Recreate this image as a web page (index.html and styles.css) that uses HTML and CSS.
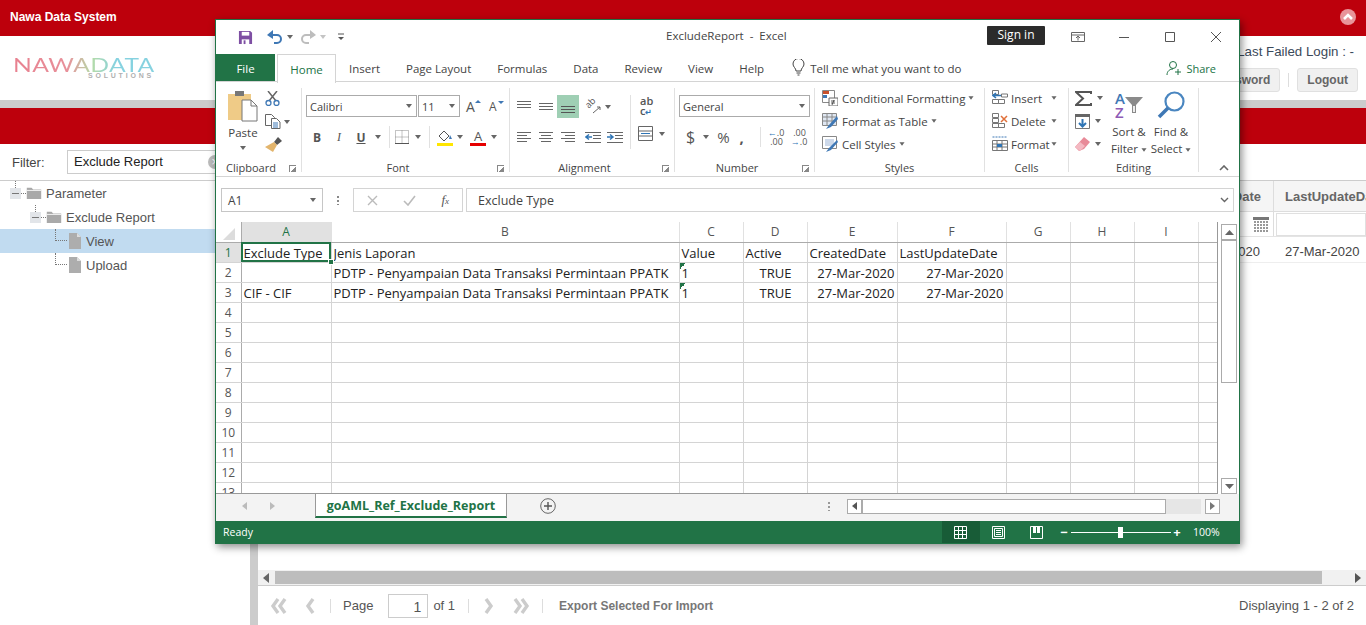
FILE: index.html
```html
<!DOCTYPE html>
<html lang="en">
<head>
    <meta charset="UTF-8">
    <title>Nawa Data System</title>
    <link rel="stylesheet" href="styles.css">
</head>
<body>

    <!-- Background app -->
    <div class="app">
        <div class="topbar">
            <span class="app-title">Nawa Data System</span>
            <svg class="collapse-top" width="18" height="18" viewBox="0 0 18 18"><circle cx="9" cy="9" r="8" fill="#e8949a"/><path d="M5 11l4-4 4 4" fill="none" stroke="#fff" stroke-width="2.6"/></svg>
        </div>
        <div class="brandbar">
            <div class="logo">
                <div class="logo-main">NAWADATA</div>
                <div class="logo-sub">SOLUTIONS</div>
            </div>
            <div class="userbox">
                <div class="last-login">Last Failed Login : -</div>
                <div class="user-btns">
                    <span class="btn">Change Password</span>
                    <span class="btn-sep"></span>
                    <span class="btn">Logout</span>
                </div>
            </div>
        </div>
        <div class="grayline"></div>
        <div class="redband"></div>

        <div class="workspace">
            <div class="sidebar">
                <div class="filter-row">
                    <label class="filter-label">Filter:</label>
                    <div class="filter-input">Exclude Report<span class="filter-clear">×</span></div>
                </div>
                <div class="tree">
                    <div class="tree-row lvl0"><span class="tree-toggle"></span><svg width="16" height="12" viewBox="0 0 20 14" preserveAspectRatio="none"><path d="M1 1h6l2 2h10v11H1z" fill="#a9a9a9"/><path d="M1 4h18" stroke="#fff"/></svg>Parameter</div>
                    <div class="tree-row lvl1"><span class="tree-toggle"></span><svg width="16" height="12" viewBox="0 0 20 14" preserveAspectRatio="none"><path d="M1 1h6l2 2h10v11H1z" fill="#a9a9a9"/><path d="M1 4h18" stroke="#fff"/></svg>Exclude Report</div>
                    <div class="tree-row lvl2 selected"><span class="tree-dots"></span><svg width="14" height="16" viewBox="0 0 14 16"><path d="M1 0h8l4 4v12H1z" fill="#adadad"/><path d="M9 0v4h4z" fill="#ddd"/></svg>View</div>
                    <div class="tree-row lvl2"><span class="tree-dots"></span><svg width="14" height="16" viewBox="0 0 14 16"><path d="M1 0h8l4 4v12H1z" fill="#adadad"/><path d="M9 0v4h4z" fill="#ddd"/></svg>Upload</div>
                </div>
            </div>
            <div class="splitter"></div>
            <div class="main">
                <div class="grid-area">
                    <div class="grid-head">
                        <div class="gh-cell gh-created">CreatedDate</div>
                        <div class="gh-cell gh-updated">LastUpdateDate</div>
                    </div>
                    <div class="grid-filter">
                        <div class="gf-cell gf-created"><svg width="16" height="15" viewBox="0 0 16 15"><path d="M0 0h16v3H0z" fill="#777"/><path d="M1 5h14M1 8h14M1 11h14M1 14h14" stroke="#999" stroke-width="2" stroke-dasharray="2 1"/></svg></div>
                        <div class="gf-cell gf-updated"><div class="gf-input"></div></div>
                    </div>
                    <div class="grid-row">
                        <div class="gr-cell gr-created">27-Mar-2020</div>
                        <div class="gr-cell gr-updated">27-Mar-2020</div>
                    </div>
                </div>
                <div class="hscroll">
                    <svg width="6" height="10" viewBox="0 0 6 10"><path d="M6 0v10L0 5z" fill="#666"/></svg>
                    <div class="hscroll-thumb"></div>
                    <svg width="6" height="10" viewBox="0 0 6 10"><path d="M0 0v10l6-5z" fill="#555"/></svg>
                </div>
                <div class="pager">
                    <svg class="pg-ic" width="17" height="16" viewBox="0 0 17 16"><path d="M8 1L3 8l5 7M15 1l-5 7 5 7" fill="none" stroke="#ccc" stroke-width="3.400"/></svg>
                    <svg class="pg-ic pg-prev" width="10" height="16" viewBox="0 0 10 16"><path d="M8 1L3 8l5 7" fill="none" stroke="#ccc" stroke-width="3.400"/></svg>
                    <span class="pg-sep"></span>
                    <span class="pg-text">Page</span>
                    <span class="pg-input">1</span>
                    <span class="pg-text">of 1</span>
                    <span class="pg-sep pg-sep2"></span>
                    <svg class="pg-ic pg-next" width="10" height="16" viewBox="0 0 10 16"><path d="M2 1l5 7-5 7" fill="none" stroke="#ccc" stroke-width="3.400"/></svg>
                    <svg class="pg-ic pg-last" width="17" height="16" viewBox="0 0 17 16"><path d="M2 1l5 7-5 7M9 1l5 7-5 7" fill="none" stroke="#ccc" stroke-width="3.400"/></svg>
                    <span class="pg-sep pg-sep3"></span>
                    <span class="pg-export">Export Selected For Import</span>
                    <span class="pg-display">Displaying 1 - 2 of 2</span>
                </div>
            </div>
        </div>
    </div>

    <!-- Excel window -->
    <div class="xl">
        <div class="xl-title">
            <div class="qat">
                <svg width="15" height="15" viewBox="0 0 16 16"><path d="M1 1h12l2 2v12H1z" fill="#7e4fa3"/><path d="M4 2h8v4H4z" fill="#fff"/><path d="M4 10h8v5H4z" fill="#fff"/><path d="M6 11h2v4H6z" fill="#7e4fa3"/></svg>
                <svg class="q-undo" width="15" height="14" viewBox="0 0 15 14"><path d="M3 5h7a3.500 3.500 0 0 1 0 8H7" fill="none" stroke="#3f78b5" stroke-width="2"/><path d="M6 0v9L0 5z" fill="#3f78b5"/></svg>
                <span class="caret"></span>
                <svg class="q-redo" width="15" height="14" viewBox="0 0 15 14"><path d="M12 5H5a3.500 3.500 0 0 0 0 8h3" fill="none" stroke="#bdbdbd" stroke-width="2"/><path d="M9 0v9l6-4z" fill="#bdbdbd"/></svg>
                <span class="caret light"></span>
                <svg class="q-more" width="8" height="8" viewBox="0 0 8 8"><path d="M1 1h6" stroke="#555"/><path d="M1 4h6L4 7z" fill="#555"/></svg>
            </div>
            <div class="xl-name">ExcludeReport&nbsp; -&nbsp; Excel</div>
            <div class="win-ctl">
                <span class="signin">Sign in</span>
                <svg class="w-ribbon" width="14" height="10" viewBox="0 0 14 10"><path d="M.5.500h13v9H.5zM.5 3h13M7 8.500V4M5 6l2-2 2 2" fill="none" stroke="#666"/></svg>
                <svg class="w-min" width="10" height="10" viewBox="0 0 10 10"><path d="M0 5.500h10" stroke="#555"/></svg>
                <svg class="w-max" width="10" height="10" viewBox="0 0 10 10"><path d="M.5.500h9v9h-9z" fill="none" stroke="#555"/></svg>
                <svg class="w-close" width="10" height="10" viewBox="0 0 10 10"><path d="M0 0l10 10M10 0L0 10" stroke="#555"/></svg>
            </div>
        </div>

        <div class="xl-tabs">
            <span class="tab tab-file">File</span>
            <span class="tab tab-home">Home</span>
            <span class="tab t-insert">Insert</span>
            <span class="tab t-next">Page Layout</span>
            <span class="tab t-next">Formulas</span>
            <span class="tab t-next">Data</span>
            <span class="tab t-next">Review</span>
            <span class="tab t-next">View</span>
            <span class="tab t-next">Help</span>
            <svg class="tell-ic" width="13" height="17" viewBox="0 0 13 17"><path d="M4 12c0-3-3-4-3-7a5.500 5.500 0 0 1 11 0c0 3-3 4-3 7zM4.500 14h4M5.500 16h2" fill="none" stroke="#444"/></svg>
            <span class="tell">Tell me what you want to do</span>
            <span class="share"><svg width="16" height="16" viewBox="0 0 16 16"><circle cx="7" cy="5" r="3.500" fill="none" stroke="#217346"/><path d="M1 15c0-4 3-6 6-6M12 9v6M9 12h6" fill="none" stroke="#217346"/></svg>Share</span>
        </div>

        <div class="ribbon">
            <section class="rg rg-clip">
                <div class="rb">
                    <div class="paste">
                        <svg width="30" height="32" viewBox="0 0 30 32"><path d="M0 4h23v26H0z" fill="#efcb87"/><path d="M7 1h9v5H7z" fill="#777"/><path d="M14 10h9l6 6v15H14z" fill="#fff" stroke="#777"/><path d="M23 10v6h6" fill="none" stroke="#777"/></svg>
                        <div class="paste-t">Paste</div>
                        <span class="caret"></span>
                    </div>
                    <div class="stack clip-tools">
                        <svg width="15" height="15" viewBox="0 0 15 15"><path d="M3 0l8 10M12 0L4 10" stroke="#666" stroke-width="1.500"/><circle cx="3.500" cy="12" r="2.500" fill="none" stroke="#3f78b5" stroke-width="1.300"/><circle cx="11.500" cy="12" r="2.500" fill="none" stroke="#3f78b5" stroke-width="1.300"/></svg>
                        <span class="row"><svg width="16" height="15" viewBox="0 0 16 15"><path d="M.5.500h6l3 3v8h-9z" fill="#fff" stroke="#666"/><path d="M6.500 4.500h5l3.500 3.500v6.500h-8.500z" fill="#fff" stroke="#666"/><path d="M8 9h5M8 11h5M8 13h5" stroke="#3f78b5"/></svg><span class="caret c-copy"></span></span>
                        <svg width="17" height="15" viewBox="0 0 17 15"><path d="M9 5l4-5 4 4-5 4z" fill="#555"/><path d="M9 5l3 3-4 7-8-5z" fill="#e3b56d"/></svg>
                    </div>
                </div>
                <div class="rl">Clipboard<i class="launch"></i></div>
            </section>

            <section class="rg rg-font">
                <div class="rb stack font-stack">
                    <div class="row">
                        <span class="combo c-name">Calibri<span class="caret"></span></span>
                        <span class="combo c-size">11<span class="caret"></span></span>
                        <span class="growA">A<i class="up"></i></span>
                        <span class="growA small">A<i class="dn"></i></span>
                    </div>
                    <div class="row font-row2">
                        <b class="f-b">B</b>
                        <i class="f-i">I</i>
                        <u class="f-u">U</u>
                        <span class="caret c-u"></span>
                        <span class="vsep"></span>
                        <svg class="f-bord" width="14" height="14" viewBox="0 0 14 14"><path d="M.5.500h13v13H.5zM7 .500v13M.5 7h13" fill="none" stroke="#888" stroke-dasharray="1 1"/><path d="M0 13.500h14" stroke="#555"/></svg>
                        <span class="caret c-bord"></span>
                        <span class="vsep"></span>
                        <svg class="f-fill" width="16" height="17" viewBox="0 0 16 17"><path d="M2 7l5-5 5 5-5 5z" fill="#fff" stroke="#555"/><path d="M13 6l2 4h-3z" fill="#3f78b5"/><path d="M0 14h16v3H0z" fill="#ffe600"/></svg>
                        <span class="caret c-fill"></span>
                        <span class="f-color">A</span>
                        <span class="caret c-color"></span>
                    </div>
                </div>
                <div class="rl">Font<i class="launch"></i></div>
            </section>

            <section class="rg rg-align">
                <div class="rb align-body">
                    <div class="stack al-stack">
                        <div class="row al-row1">
                            <svg class="al" width="14" height="14" viewBox="0 0 14 14"><path d="M0 1.500h14M0 4.500h14M0 7.500h14" stroke="#666"/></svg>
                            <svg class="al" width="14" height="14" viewBox="0 0 14 14"><path d="M0 3.500h14M0 6.500h14M0 9.500h14" stroke="#666"/></svg>
                            <span class="al-on"><svg width="14" height="14" viewBox="0 0 14 14"><path d="M0 6.500h14M0 9.500h14M0 12.500h14" stroke="#555"/></svg></span>
                            <span class="al-or"><span class="al-ab">ab</span><svg width="16" height="15" viewBox="0 0 16 15"><path d="M8 14l7-6M12 8h3v3" fill="none" stroke="#666"/></svg></span>
                            <span class="caret"></span>
                        </div>
                        <div class="row al-row2">
                            <svg class="al" width="14" height="12" viewBox="0 0 14 12"><path d="M0 .500h14M0 3.500h10M0 6.500h14M0 9.500h10" stroke="#666"/></svg>
                            <svg class="al" width="14" height="12" viewBox="0 0 14 12"><path d="M0 .500h14M2 3.500h10M0 6.500h14M2 9.500h10" stroke="#666"/></svg>
                            <svg class="al" width="14" height="12" viewBox="0 0 14 12"><path d="M0 .500h14M4 3.500h10M0 6.500h14M4 9.500h10" stroke="#666"/></svg>
                            <svg class="al-in" width="16" height="12" viewBox="0 0 16 12"><path d="M0 .500h16M8 3.500h8M8 6.500h8M0 10.500h16" stroke="#666"/><path d="M7 5H2M4 2.500L1 5l3 2.500" fill="none" stroke="#2f75b5" stroke-width="1.500"/></svg>
                            <svg class="al-in" width="16" height="12" viewBox="0 0 16 12"><path d="M0 .500h16M8 3.500h8M8 6.500h8M0 10.500h16" stroke="#666"/><path d="M0 5h5M3 2.500L6 5 3 7.500" fill="none" stroke="#2f75b5" stroke-width="1.500"/></svg>
                        </div>
                    </div>
                    <span class="vsep tall"></span>
                    <div class="stack al-wrap">
                        <div class="wrap-ic"><span>ab</span><span>c<em>↵</em></span></div>
                        <div class="row merge"><svg width="15" height="15" viewBox="0 0 15 15"><path d="M.5.500h14v14H.5zM.5 5h14M.5 10h14" fill="none" stroke="#666"/><path d="M3 7.500h9" stroke="#2f75b5"/></svg><span class="caret c-merge"></span></div>
                    </div>
                </div>
                <div class="rl">Alignment<i class="launch"></i></div>
            </section>

            <section class="rg rg-num">
                <div class="rb stack num-stack">
                    <span class="combo c-fmt">General<span class="caret"></span></span>
                    <div class="row num-row">
                        <span class="n-sym n-dollar">$</span><span class="caret"></span>
                        <span class="n-sym n-pct">%</span>
                        <span class="n-sym n-comma">,</span>
                        <span class="vsep"></span>
                        <span class="n-dec"><span><em>←</em>.0</span><span>.00</span></span>
                        <span class="n-dec"><span>.00</span><span><em>→</em>.0</span></span>
                    </div>
                </div>
                <div class="rl">Number<i class="launch"></i></div>
            </section>

            <section class="rg rg-styles">
                <div class="rb stack st-stack">
                    <div class="row st"><svg width="16" height="16" viewBox="0 0 16 16"><path d="M.5.500h12v12H.5z" fill="#fff" stroke="#888"/><path d="M1 1h6v3H1z" fill="#c8502b"/><path d="M1 5h4v3H1z" fill="#3f78b5"/><path d="M7 8h9v8H7z" fill="#fff" stroke="#666"/><path d="M9 11h4M9 13h4M12 10l-2 5" stroke="#333" stroke-width=".8"/></svg>Conditional Formatting<span class="caret"></span></div>
                    <div class="row st"><svg width="16" height="16" viewBox="0 0 16 16"><path d="M.5.500h14v12H.5zM.5 4h14M.5 8h14M5 .500v12M10 .500v12" fill="#dfe7f2" stroke="#888"/><path d="M15 3l-8 9-3 4 5-2 7-8z" fill="#3f78b5"/></svg>Format as Table<span class="caret"></span></div>
                    <div class="row st"><svg width="16" height="16" viewBox="0 0 16 16"><path d="M.5.500h14v12H.5z" fill="#fff" stroke="#888"/><path d="M3 3h9v7H3z" fill="#cdd9ea"/><path d="M15 4l-8 8-3 4 5-2 7-8z" fill="#3f78b5"/></svg>Cell Styles<span class="caret"></span></div>
                </div>
                <div class="rl">Styles</div>
            </section>

            <section class="rg rg-cells">
                <div class="rb stack st-stack">
                    <div class="row st ce"><svg width="16" height="16" viewBox="0 0 16 16"><path d="M.5.500h6v4h-6zM.5 9.500h6v4h-6zM6.500 9.500h6v4h-6zM9.500 4h6v3h-6z" fill="#fff" stroke="#777"/><path d="M9 5.500H2M4 3L1 5.500 4 8" fill="none" stroke="#2f75b5" stroke-width="1.500"/></svg><span class="ce-t">Insert</span><span class="caret"></span></div>
                    <div class="row st ce"><svg width="16" height="16" viewBox="0 0 16 16"><path d="M.5.500h6v4h-6zM.5 5.500h6v4h-6zM.5 10.500h6v4h-6zM6.500 10.500h6v4h-6z" fill="#fff" stroke="#777"/><path d="M9 3l6 6M15 3L9 9" stroke="#e0703a" stroke-width="1.500"/></svg><span class="ce-t">Delete</span><span class="caret"></span></div>
                    <div class="row st ce"><svg width="16" height="16" viewBox="0 0 16 16"><path d="M.5 1h15" stroke="#3f78b5" stroke-dasharray="2 1"/><path d="M.5 4.500h15v10H.5zM.5 8h15M.5 11h15M5 4.500v10M10 4.500v10" fill="#fff" stroke="#777"/><path d="M5 8h5v3H5z" fill="#2f75b5"/></svg><span class="ce-t">Format</span><span class="caret"></span></div>
                </div>
                <div class="rl">Cells</div>
            </section>

            <section class="rg rg-edit">
                <div class="rb edit-body">
                    <div class="stack ed-tools">
                        <div class="row"><svg width="17" height="15" viewBox="0 0 17 15"><path d="M16 3V1H1l7 6.500L1 14h15v-2" fill="none" stroke="#555" stroke-width="2"/></svg><span class="caret"></span></div>
                        <div class="row"><svg width="15" height="15" viewBox="0 0 15 15"><path d="M.5.500h14v14H.5z" fill="#fff" stroke="#777"/><path d="M0 0h15v3H0z" fill="#666"/><path d="M7.500 5v7M4 9l3.500 3.500L11 9" fill="none" stroke="#2f75b5" stroke-width="2"/></svg><span class="caret"></span></div>
                        <div class="row"><svg width="15" height="14" viewBox="0 0 15 14"><path d="M9 0l6 5-6 7-5 2-4-4z" fill="#e88a98"/><path d="M0 10l5-5 5 4-5 5z" fill="#f4b9c2"/></svg><span class="caret"></span></div>
                    </div>
                    <div class="big">
                        <div class="big-ic">
                            <span class="az"><span class="a">A</span><span class="z">Z</span></span>
                            <svg class="funnel" width="18" height="16" viewBox="0 0 18 16"><path d="M0 0h18l-7 8v8H7V8z" fill="#8a8a8a"/><path d="M8 9h2v6H8z" fill="#eee"/></svg>
                        </div>
                        <div class="big-t">Sort &amp;<br>Filter<span class="caret"></span></div>
                    </div>
                    <div class="big big-find">
                        <div class="big-ic"><svg width="28" height="28" viewBox="0 0 28 28"><circle cx="17.500" cy="10.500" r="9" fill="#fff" stroke="#4a86c0" stroke-width="2.200"/><path d="M11 17L2 26" stroke="#3f78b5" stroke-width="3.500"/></svg></div>
                        <div class="big-t">Find &amp;<br>Select<span class="caret"></span></div>
                    </div>
                </div>
                <div class="rl">Editing</div>
            </section>
            <svg class="rb-collapse" width="10" height="6" viewBox="0 0 10 6"><path d="M1 5l4-4 4 4" fill="none" stroke="#666" stroke-width="1.600"/></svg>
        </div>

        <div class="fbar">
            <div class="namebox">A1<span class="caret"></span></div>
            <span class="fb-dots"></span>
            <div class="fb-btns">
                <svg width="11" height="11" viewBox="0 0 11 11"><path d="M1 1l9 9M10 1L1 10" stroke="#bbb" stroke-width="1.400"/></svg>
                <svg width="13" height="11" viewBox="0 0 13 11"><path d="M1 6l4 4 7-9" fill="none" stroke="#bbb" stroke-width="1.600"/></svg>
                <em class="fx">f<small>x</small></em>
            </div>
            <div class="finput">Exclude Type<svg width="9" height="6" viewBox="0 0 9 6"><path d="M1 1l3.500 3.500L8 1" fill="none" stroke="#666" stroke-width="1.400"/></svg></div>
        </div>

        <div class="sheet-wrap">
            <div class="sheet-clip">
                <table class="sheet">
                    <colgroup><col class="c0"><col class="c1"><col class="c2"><col class="c3"><col class="c3"><col class="c1"><col class="c4"><col class="c3"><col class="c3"><col class="c3"><col class="c5"></colgroup>
                    <tr><th class="corner"><i></i></th><th class="ch-on">A</th><th>B</th><th>C</th><th>D</th><th>E</th><th>F</th><th>G</th><th>H</th><th>I</th><th></th></tr>
                    <tr><th class="rh-on">1</th><td class="active">Exclude Type<i></i></td><td>Jenis Laporan</td><td>Value</td><td>Active</td><td>CreatedDate</td><td>LastUpdateDate</td><td></td><td></td><td></td><td></td></tr>
                    <tr><th>2</th><td></td><td>PDTP - Penyampaian Data Transaksi Permintaan PPATK</td><td class="tri">1</td><td class="ctr">TRUE</td><td class="rt">27-Mar-2020</td><td class="rt">27-Mar-2020</td><td></td><td></td><td></td><td></td></tr>
                    <tr><th>3</th><td>CIF - CIF</td><td>PDTP - Penyampaian Data Transaksi Permintaan PPATK</td><td class="tri">1</td><td class="ctr">TRUE</td><td class="rt">27-Mar-2020</td><td class="rt">27-Mar-2020</td><td></td><td></td><td></td><td></td></tr>
                    <tr><th>4</th><td></td><td></td><td></td><td></td><td></td><td></td><td></td><td></td><td></td><td></td></tr>
                    <tr><th>5</th><td></td><td></td><td></td><td></td><td></td><td></td><td></td><td></td><td></td><td></td></tr>
                    <tr><th>6</th><td></td><td></td><td></td><td></td><td></td><td></td><td></td><td></td><td></td><td></td></tr>
                    <tr><th>7</th><td></td><td></td><td></td><td></td><td></td><td></td><td></td><td></td><td></td><td></td></tr>
                    <tr><th>8</th><td></td><td></td><td></td><td></td><td></td><td></td><td></td><td></td><td></td><td></td></tr>
                    <tr><th>9</th><td></td><td></td><td></td><td></td><td></td><td></td><td></td><td></td><td></td><td></td></tr>
                    <tr><th>10</th><td></td><td></td><td></td><td></td><td></td><td></td><td></td><td></td><td></td><td></td></tr>
                    <tr><th>11</th><td></td><td></td><td></td><td></td><td></td><td></td><td></td><td></td><td></td><td></td></tr>
                    <tr><th>12</th><td></td><td></td><td></td><td></td><td></td><td></td><td></td><td></td><td></td><td></td></tr>
                    <tr><th>13</th><td></td><td></td><td></td><td></td><td></td><td></td><td></td><td></td><td></td><td></td></tr>
                </table>
            </div>
            <div class="vbar">
                <span class="vb-btn"><svg width="9" height="5" viewBox="0 0 9 5"><path d="M0 5l4.500-5L9 5z" fill="#666"/></svg></span>
                <span class="vb-thumb"></span>
                <span class="vb-btn vb-down"><svg width="9" height="5" viewBox="0 0 9 5"><path d="M0 0l4.500 5L9 0z" fill="#666"/></svg></span>
            </div>
        </div>

        <div class="tabstrip">
            <svg class="ts-prev" width="5" height="8" viewBox="0 0 5 8"><path d="M5 0v8L0 4z" fill="#bbb"/></svg>
            <svg class="ts-next" width="5" height="8" viewBox="0 0 5 8"><path d="M0 0v8l5-4z" fill="#bbb"/></svg>
            <span class="sheet-tab">goAML_Ref_Exclude_Report</span>
            <svg class="ts-add" width="16" height="16" viewBox="0 0 16 16"><circle cx="8" cy="8" r="7.300" fill="none" stroke="#666"/><path d="M8 4v8M4 8h8" stroke="#555" stroke-width="1.400"/></svg>
            <span class="ts-dots"></span>
            <div class="ts-scroll">
                <span class="ts-btn"><svg width="5" height="8" viewBox="0 0 5 8"><path d="M5 0v8L0 4z" fill="#555"/></svg></span>
                <span class="ts-thumb"></span>
                <span class="ts-track"></span>
                <span class="ts-btn ts-right"><svg width="5" height="8" viewBox="0 0 5 8"><path d="M0 0v8l5-4z" fill="#777"/></svg></span>
            </div>
        </div>

        <div class="status">
            <span class="ready">Ready</span>
            <div class="views">
                <span class="view on"><svg width="13" height="13" viewBox="0 0 13 13"><path d="M.5.500h12v12H.5zM.5 4.500h12M.5 8.500h12M4.500.500v12M8.500.500v12" fill="none" stroke="#fff"/></svg></span>
                <span class="view"><svg width="13" height="13" viewBox="0 0 13 13"><path d="M.5.500h12v12H.5zM2.500 2.500h8v8h-8zM4 4.500h5M4 6.500h5M4 8.500h5" fill="none" stroke="#fff"/></svg></span>
                <span class="view"><svg width="13" height="13" viewBox="0 0 13 13"><path d="M.5.500h12v12H.5z" fill="none" stroke="#fff"/><path d="M3 1h3v6H3zM7 1h3v6H7z" fill="#fff"/></svg></span>
            </div>
            <div class="zoomer">
                <b class="z-btn">−</b>
                <span class="z-track"><i></i></span>
                <b class="z-btn">+</b>
                <span class="z-pct">100%</span>
            </div>
        </div>
    </div>

</body>
</html>
```
FILE: styles.css
```css
* {
    box-sizing: border-box;
}

html, body {
    margin: 0;
    height: 625px;
    overflow: hidden;
}

body {
    font-family: 'Liberation Sans', Arial, sans-serif;
    font-size: 13px;
    color: #444;
    background: #fff;
}

/* ---------- background app ---------- */
.app {
    height: 625px;
    display: flex;
    flex-direction: column;
}

.topbar {
    height: 36px;
    flex: none;
    background: #bd000c;
    display: flex;
    align-items: center;
    justify-content: space-between;
    padding: 0 9px 2px 10px;
}

.app-title {
    color: #fff;
    font-size: 12px;
    font-weight: bold;
}

.brandbar {
    height: 64px;
    flex: none;
    display: flex;
    justify-content: space-between;
    padding: 0 8px 0 13px;
}

.logo {
    padding-top: 20px;
    width: 141px;
}

.logo-main {
    font-family: 'Lato', sans-serif;
    font-weight: 400;
    font-size: 19px;
    line-height: 17px;
    letter-spacing: 0.3px;
    white-space: nowrap;
    width: 110px;
    transform: scaleX(1.3);
    transform-origin: left center;
    background: linear-gradient(to right, #e8808f 0, #e8909a 38%, #b5dba8 55%, #86d2e0 72%, #86d2e0 100%);
    -webkit-background-clip: text;
    background-clip: text;
    color: transparent;
}

.logo-sub {
    font-size: 7px;
    line-height: 6px;
    font-weight: bold;
    letter-spacing: 2.8px;
    color: #b0b0b0;
    text-align: right;
}

.userbox {
    display: flex;
    flex-direction: column;
    align-items: flex-end;
}

.last-login {
    font-size: 13.300px;
    color: #3b4a5a;
    line-height: 16px;
    margin-top: 8px;
    padding-right: 4px;
}

.user-btns {
    display: flex;
    align-items: center;
    margin-top: 8px;
}

.btn {
    height: 24px;
    line-height: 23px;
    padding: 0 9px;
    font-size: 12px;
    font-weight: bold;
    color: #666;
    background: #f0f0f0;
    border: 1px solid #e0e0e0;
    border-radius: 3px;
}

.btn-sep {
    width: 1px;
    height: 14px;
    background: #ddd;
    margin: 0 8px;
}

.grayline {
    height: 8px;
    flex: none;
    background: #ccc;
}

.redband {
    height: 36px;
    flex: none;
    background: #bd000c;
}

.workspace {
    flex: 1;
    display: flex;
    min-height: 0;
}

.sidebar {
    width: 250px;
    flex: none;
}

.filter-row {
    height: 37px;
    display: flex;
    align-items: center;
    padding-left: 12px;
    border-bottom: 1px solid #ccc;
}

.filter-label {
    width: 55px;
    font-size: 13px;
}

.filter-input {
    width: 158px;
    height: 24px;
    border: 1px solid #ccc;
    line-height: 22px;
    padding-left: 6px;
    color: #222;
    position: relative;
}

.filter-clear {
    position: absolute;
    right: 2px;
    top: 4px;
    width: 14px;
    height: 14px;
    border-radius: 50%;
    background: #bbb;
    color: #fff;
    font-size: 12px;
    line-height: 14px;
    text-align: center;
}

.tree-row {
    height: 24px;
    display: flex;
    align-items: center;
    font-size: 13px;
    color: #555;
}

.tree-row svg {
    flex: none;
}

.lvl0 { padding-left: 10px; }
.lvl1 { padding-left: 30px; }
.lvl2 { padding-left: 55px; }

.lvl0 svg, .lvl1 svg {
    margin: 0 4px 0 5px;
}

.lvl2 svg {
    margin: 0 4px 0 1px;
}

.tree-row.selected {
    background: #c1dbf0;
}

.tree-toggle {
    width: 11px;
    height: 11px;
    background: linear-gradient(#777, #777) center / 7px 1px no-repeat #e2e5e9;
    position: relative;
    flex: none;
}

.tree-toggle::before {
    content: '';
    position: absolute;
    left: 5px;
    top: -7px;
    height: 7px;
    border-left: 1px dotted #777;
}

.tree-toggle::after {
    content: '';
    position: absolute;
    left: 11px;
    top: 5px;
    width: 5px;
    border-top: 1px dotted #777;
}

.tree-dots {
    width: 12px;
    height: 12px;
    margin-bottom: 12px;
    border-left: 1px dotted #777;
    border-bottom: 1px dotted #777;
    flex: none;
}

.splitter {
    width: 8px;
    flex: none;
    background: #ccc;
}

.main {
    flex: 1;
    min-width: 0;
    display: flex;
    flex-direction: column;
}

.grid-area {
    height: 426px;
    padding-top: 36px;
}

.grid-head {
    height: 32px;
    display: flex;
    justify-content: flex-end;
    background: #f5f5f5;
    border-top: 1px solid #ccc;
    border-bottom: 1px solid #ddd;
}

.gh-cell {
    display: flex;
    align-items: center;
    font-size: 13px;
    font-weight: bold;
    color: #666;
    white-space: nowrap;
    overflow: hidden;
    border-right: 1px solid #ddd;
}

.gh-created {
    width: 89px;
    justify-content: flex-end;
    padding-right: 12px;
}

.gh-updated {
    width: 92px;
    padding-left: 11px;
    border-right: 0;
}

.grid-filter {
    height: 25px;
    display: flex;
    justify-content: flex-end;
    border-bottom: 1px solid #e4e4e4;
}

.gf-cell {
    display: flex;
    align-items: center;
}

.gf-created {
    width: 89px;
    justify-content: flex-end;
    padding-right: 4px;
    border-right: 1px solid #ddd;
}

.gf-updated {
    width: 92px;
    padding-left: 2px;
}

.gf-input {
    width: 100%;
    height: 23px;
    border: 1px solid #e0e0e0;
}

.grid-row {
    height: 26px;
    display: flex;
    justify-content: flex-end;
    align-items: center;
    padding-top: 4px;
    border-bottom: 1px solid #eee;
    font-size: 13px;
}

.gr-created {
    width: 89px;
    text-align: right;
    padding-right: 14px;
}

.gr-updated {
    width: 92px;
    padding-left: 11px;
}

.hscroll {
    height: 16px;
    background: #f1f1f1;
    border-bottom: 1px solid #ccc;
    display: flex;
    align-items: center;
    justify-content: space-between;
    padding: 0 5px;
}

.hscroll-thumb {
    flex: 1;
    height: 13px;
    background: #bdbdbd;
    margin: 0 33px 0 6px;
}

.pager {
    flex: 1;
    display: flex;
    align-items: center;
    font-size: 13px;
    color: #555;
    padding: 0 12px;
}

.pg-prev { margin-left: 18px; }
.pg-next { margin-left: 3px; }
.pg-last { margin-left: 19px; }

.pg-sep {
    width: 1px;
    height: 14px;
    background: #ddd;
    margin: 0 12px 0 15px;
}

.pg-sep2 { margin-left: 13px; }
.pg-sep3 { margin-left: 12px; }

.pg-input {
    width: 40px;
    height: 24px;
    border: 1px solid #ccc;
    text-align: right;
    line-height: 24px;
    padding-right: 6px;
    margin: 0 5px 0 15px;
    font-size: 14px;
}

.pg-export {
    font-size: 12px;
    font-weight: bold;
    color: #777;
    margin-left: 4px;
}

.pg-display {
    margin-left: auto;
}

/* ---------- excel window ---------- */
.xl {
    position: absolute;
    left: 215px;
    top: 19px;
    width: 1025px;
    height: 525px;
    background: #fff;
    border: 1px solid #217346;
    box-shadow: 2px 3px 8px rgba(0, 0, 0, 0.45);
    display: flex;
    flex-direction: column;
    font-family: 'Open Sans', sans-serif;
    font-size: 12px;
    color: #444;
}

.caret {
    display: inline-block;
    width: 0;
    height: 0;
    border-left: 3.500px solid transparent;
    border-right: 3.500px solid transparent;
    border-top: 4px solid #666;
    flex: none;
}

.caret.light {
    border-top-color: #c4c4c4;
}

.row {
    display: flex;
    align-items: center;
}

.stack {
    display: flex;
    flex-direction: column;
}

.xl-title {
    height: 34px;
    flex: none;
    display: flex;
    align-items: center;
    position: relative;
}

.qat {
    display: flex;
    align-items: center;
    padding-left: 22px;
}

.q-undo { margin-left: 14px; }
.qat .caret { margin-left: 5px; }
.q-redo { margin-left: 8px; }
.qat .caret.light { margin-left: 4px; }
.q-more { margin-left: 11px; }

.xl-name {
    position: absolute;
    left: 450px;
    top: 8px;
    font-size: 11.500px;
}

.win-ctl {
    margin-left: auto;
    display: flex;
    align-items: center;
    padding-right: 18px;
}

.signin {
    width: 58px;
    height: 19px;
    margin-top: -3px;
    background: #2b2b2b;
    color: #fff;
    border-radius: 1px;
    text-align: center;
    line-height: 18px;
    font-size: 12px;
}

.w-ribbon { margin-left: 26px; }
.w-min { margin-left: 34px; }
.w-max { margin-left: 36px; }
.w-close { margin-left: 36px; }

.xl-tabs {
    height: 28px;
    flex: none;
    display: flex;
    align-items: stretch;
    border-bottom: 1px solid #d4d4d4;
    position: relative;
    font-size: 11.500px;
}

.tab {
    display: flex;
    align-items: center;
    padding-top: 1px;
    color: #444;
    white-space: nowrap;
}

.tab-file {
    width: 59px;
    justify-content: center;
    background: #217346;
    color: #fff;
}

.tab-home {
    width: 59px;
    margin-left: 2px;
    justify-content: center;
    color: #217346;
    background: #fff;
    border: 1px solid #d4d4d4;
    border-bottom: 0;
    height: 29px;
}

.t-insert { margin-left: 13px; }
.t-next { margin-left: 26px; }

.tell-ic {
    margin: 5px 5px 0 28px;
}

.tell {
    align-self: center;
    color: #444;
    padding-top: 1px;
}

.share {
    margin-left: auto;
    padding: 1px 23px 0 0;
    display: flex;
    align-items: center;
    gap: 4px;
    font-size: 11px;
    color: #217346;
}

.ribbon {
    height: 95px;
    flex: none;
    display: flex;
    border-bottom: 1px solid #d4d4d4;
    position: relative;
}

.rg {
    display: flex;
    flex-direction: column;
    border-right: 1px solid #e1e1e1;
    margin: 6px 0 4px;
}

.rb {
    flex: 1;
    min-height: 0;
}

.rl {
    height: 14px;
    line-height: 20px;
    font-size: 11px;
    text-align: center;
    position: relative;
    color: #444;
}

.launch {
    position: absolute;
    right: 5px;
    top: 7px;
    width: 7px;
    height: 7px;
    border-left: 1px solid #888;
    border-top: 1px solid #888;
    background: linear-gradient(135deg, transparent 55%, #888 55%);
}

.rg-clip { width: 86px; }
.rg-font { width: 208px; }
.rg-align { width: 165px; }
.rg-num { width: 140px; }
.rg-styles { width: 170px; }
.rg-cells { width: 84px; }
.rg-edit { width: 130px; }

.rg-clip .rl,
.rg-font .rl,
.rg-align .rl,
.rg-num .rl {
    padding-right: 15px;
}

.rg-clip .rb {
    display: flex;
    padding: 2px 0 0 11px;
}

.paste {
    width: 32px;
    display: flex;
    flex-direction: column;
    align-items: center;
}

.paste-t {
    font-size: 11.500px;
    line-height: 14px;
    margin-top: 4px;
}

.paste .caret {
    margin-top: 6px;
}

.clip-tools {
    margin-left: 6px;
    gap: 8px;
    align-items: flex-start;
    padding-top: 1px;
}

.c-copy { margin-left: 3px; }

.combo {
    height: 22px;
    border: 1px solid #ababab;
    display: flex;
    align-items: center;
    justify-content: space-between;
    padding: 0 4px 0 3px;
    font-size: 11px;
    color: #444;
    background: #fff;
}

.font-stack {
    padding: 7px 0 0 4px;
    gap: 8px;
}

.c-name { width: 111px; }
.c-size { width: 42px; margin-left: 1px; }

.growA {
    font-size: 14px;
    color: #555;
    margin-left: 6px;
    position: relative;
    width: 17px;
}

.growA.small {
    font-size: 12px;
}

.growA i {
    position: absolute;
    right: 2px;
    top: 3px;
    border-left: 3px solid transparent;
    border-right: 3px solid transparent;
}

.growA .up { border-bottom: 3px solid #3f78b5; }
.growA .dn { border-top: 3px solid #3f78b5; }

.font-row2 {
    height: 24px;
}

.f-b, .f-i, .f-u {
    width: 22px;
    text-align: center;
    font-size: 12px;
    font-family: 'Liberation Serif', serif;
    color: #555;
}

.f-b {
    font-family: 'Open Sans', sans-serif;
}

.f-u {
    font-family: 'Open Sans', sans-serif;
    font-weight: bold;
}

.c-u { margin-left: 3px; }

.vsep {
    width: 1px;
    height: 22px;
    background: #e1e1e1;
    flex: none;
}

.font-row2 .vsep { margin: 0 5px 0 8px; }
.c-bord { margin-left: 6px; }
.f-fill { margin-left: 2px; }
.c-fill { margin-left: 4px; }

.f-color {
    margin-left: 7px;
    width: 16px;
    text-align: center;
    font-size: 13px;
    line-height: 14px;
    color: #555;
    border-bottom: 3px solid #e60000;
}

.c-color { margin-left: 5px; }

.align-body {
    display: flex;
    padding: 7px 0 0 7px;
}

.al-stack {
    width: 113px;
    flex: none;
    gap: 8px;
}

.al-row1, .al-row2 {
    height: 23px;
}

.al {
    margin-right: 8px;
}

.al-on {
    width: 22px;
    height: 23px;
    background: #9fcfb4;
    display: flex;
    align-items: center;
    justify-content: center;
    margin-left: -4px;
}

.al-or {
    margin-left: 6px;
    width: 16px;
    height: 15px;
    position: relative;
}

.al-ab {
    position: absolute;
    left: 0;
    top: -2px;
    font-size: 9px;
    line-height: 12px;
    color: #555;
    transform: rotate(-45deg);
}

.al-row1 .caret {
    margin: 0 0 0 4px;
}

.al-in {
    margin-right: 6px;
}

.al + .al-in {
    margin-left: 2px;
}

.vsep.tall {
    height: 54px;
    margin: 0 8px 0 0;
}

.al-wrap {
    gap: 8px;
}

.wrap-ic {
    height: 23px;
    font-size: 11px;
    line-height: 10px;
    font-weight: 600;
    color: #555;
    display: flex;
    flex-direction: column;
    padding: 1px 0 0 1px;
}

.wrap-ic em {
    color: #2f75b5;
    font-style: normal;
    font-size: 8px;
}

.merge { margin-left: -1px; }
.c-merge { margin-left: 6px; }

.num-stack {
    padding: 7px 0 0 4px;
    gap: 8px;
}

.c-fmt {
    width: 131px;
}

.num-row {
    height: 24px;
    padding-left: 7px;
}

.n-sym {
    font-size: 15px;
    color: #555;
}

.n-dollar { margin-right: 8px; font-size: 16px; }
.n-pct { margin-left: 8px; }
.n-comma { margin-left: 10px; font-weight: bold; }

.num-row .vsep {
    margin: 0 7px 0 16px;
    height: 20px;
}

.n-dec {
    display: flex;
    flex-direction: column;
    width: 15px;
    font-size: 9px;
    line-height: 9px;
    text-align: right;
    margin-right: 8px;
    color: #555;
}

.n-dec em {
    font-style: normal;
    color: #2f75b5;
    font-weight: bold;
}

.st-stack {
    padding: 1px 0 0 7px;
    gap: 5px;
}

.st {
    height: 18px;
    font-size: 11.500px;
    white-space: nowrap;
}

.st svg {
    margin-right: 4px;
    flex: none;
}

.st .caret {
    margin-left: 3px;
    transform: scale(0.85);
}

.ce svg {
    margin-right: 3px;
}

.ce-t {
    width: 37px;
}

.edit-body {
    display: flex;
    padding: 1px 0 0 6px;
}

.ed-tools {
    gap: 7px;
    padding-top: 1px;
}

.ed-tools .row {
    height: 16px;
}

.ed-tools .caret {
    margin-left: 5px;
}

.big {
    width: 42px;
    margin-left: 5px;
    display: flex;
    flex-direction: column;
    align-items: center;
}

.big-find {
    margin-left: 0;
}

.big-ic {
    height: 34px;
    display: flex;
    align-items: flex-end;
    padding-bottom: 4px;
}

.big-t {
    font-size: 11.500px;
    line-height: 17px;
    text-align: center;
    white-space: nowrap;
}

.big-t .caret {
    margin-left: 3px;
    vertical-align: 1px;
    transform: scale(0.85);
}

.az {
    display: flex;
    flex-direction: column;
    font-size: 15px;
    line-height: 14px;
    font-weight: 600;
}

.az .a { color: #3f78b5; }
.az .z { color: #8e5bb5; }

.funnel {
    margin-bottom: 6px;
}

.rb-collapse {
    position: absolute;
    right: 10px;
    bottom: 5px;
}

.fbar {
    height: 45px;
    flex: none;
    display: flex;
    align-items: center;
    padding: 1px 5px 0;
}

.namebox {
    width: 102px;
    height: 24px;
    border: 1px solid #c6c6c6;
    display: flex;
    align-items: center;
    justify-content: space-between;
    padding: 0 6px;
    font-size: 12px;
}

.fb-dots {
    width: 2px;
    height: 10px;
    margin: 0 14px;
    background: radial-gradient(circle, #888 1px, transparent 1px) 0 0 / 2px 4px;
    flex: none;
}

.fb-btns {
    width: 110px;
    height: 24px;
    border: 1px solid #d4d4d4;
    display: flex;
    align-items: center;
    justify-content: space-between;
    padding: 0 13px;
}

.fx {
    font-family: 'Liberation Serif', serif;
    color: #555;
    font-size: 13px;
}

.fx small {
    font-size: 9px;
}

.finput {
    flex: 1;
    height: 24px;
    border: 1px solid #d4d4d4;
    margin-left: 3px;
    display: flex;
    align-items: center;
    justify-content: space-between;
    padding: 0 4px 0 11px;
    font-size: 12.500px;
    color: #444;
}

.sheet-wrap {
    height: 272px;
    flex: none;
    display: flex;
}

.sheet-clip {
    width: 1002px;
    overflow: hidden;
    border-right: 1px solid #999;
    border-bottom: 1px solid #999;
}

.sheet {
    border-collapse: collapse;
    table-layout: fixed;
    width: 1001px;
    font-size: 13px;
    color: #222;
}

.c0 { width: 25px; }
.c1 { width: 90px; }
.c2 { width: 348px; }
.c3 { width: 64px; }
.c4 { width: 109px; }
.c5 { width: 19px; }

.sheet th {
    height: 20px;
    padding: 0;
    font-weight: normal;
    font-size: 12px;
    color: #555;
    background: #fff;
    border-right: 1px solid #e1e1e1;
    border-bottom: 1px solid #ababab;
    text-align: center;
}

.sheet tr + tr th {
    padding-top: 1px;
    border-bottom: 1px solid #d4d4d4;
    border-right: 1px solid #ababab;
}

.sheet tr:first-child th:first-child {
    border-right: 1px solid #ababab;
}

.sheet th.ch-on {
    background: #e1e1e1;
    color: #217346;
}

.sheet tr + tr th.rh-on {
    background: #e1e1e1;
    color: #217346;
}

.corner i {
    display: block;
    width: 0;
    height: 0;
    margin: 5px 0 0 7px;
    border-left: 12px solid transparent;
    border-bottom: 12px solid #dcdcdc;
}

.sheet td {
    height: 20px;
    padding: 1px 2px 0;
    border: 1px solid #d4d4d4;
    white-space: nowrap;
    overflow: hidden;
}

.sheet tr:nth-child(2) td {
    border-top: 0;
}

.sheet td.active {
    position: relative;
    overflow: visible;
    outline: 2px solid #217346;
    outline-offset: -2px;
}

.sheet td.active i {
    position: absolute;
    right: -3px;
    bottom: -3px;
    width: 6px;
    height: 6px;
    background: #217346;
    border: 1px solid #fff;
}

.sheet td.ctr {
    text-align: right;
    padding-right: 15px;
}

.rt { text-align: right; }

.tri {
    background: linear-gradient(135deg, #217346 50%, transparent 50%) 0 0 / 6px 6px no-repeat;
}

.vbar {
    flex: 1;
    padding: 2px 2px 0 3px;
    display: flex;
    flex-direction: column;
}

.vb-btn {
    height: 16px;
    flex: none;
    border: 1px solid #ababab;
    display: flex;
    align-items: center;
    justify-content: center;
    background: #fff;
}

.vb-thumb {
    height: 143px;
    flex: none;
    border: 1px solid #ababab;
    background: #fff;
}

.vb-down {
    margin-top: auto;
}

.tabstrip {
    height: 27px;
    flex: none;
    background: #f3f3f3;
    display: flex;
    align-items: center;
    padding-bottom: 3px;
}

.ts-prev { margin-left: 26px; }
.ts-next { margin-left: 23px; }

.sheet-tab {
    width: 192px;
    height: 24px;
    margin-left: 40px;
    background: #fff;
    border-left: 1px solid #999;
    border-right: 1px solid #999;
    border-bottom: 2px solid #217346;
    text-align: center;
    line-height: 24px;
    font-size: 12.500px;
    font-weight: bold;
    color: #217346;
    white-space: nowrap;
}

.ts-add { margin-left: 33px; }

.ts-dots {
    width: 2px;
    height: 10px;
    margin-left: 272px;
    background: radial-gradient(circle, #999 1px, transparent 1px) 0 0 / 2px 4px;
}

.ts-scroll {
    display: flex;
    align-items: center;
    width: 373px;
    height: 15px;
    margin-left: 17px;
}

.ts-btn {
    width: 15px;
    height: 15px;
    border: 1px solid #ababab;
    background: #fff;
    display: flex;
    align-items: center;
    justify-content: center;
    flex: none;
}

.ts-right { margin-left: 4px; }

.ts-thumb {
    width: 304px;
    height: 15px;
    border: 1px solid #ababab;
    background: #fff;
}

.ts-track {
    flex: 1;
    height: 15px;
    background: #e6e6e6;
}

.status {
    flex: 1;
    background: #217346;
    color: #fff;
    display: flex;
    align-items: center;
    font-size: 10.500px;
    padding-left: 7px;
}

.views {
    display: flex;
    margin-left: 689px;
    align-self: stretch;
}

.view {
    width: 38px;
    display: flex;
    align-items: center;
    justify-content: center;
}

.view.on {
    background: #185c37;
}

.zoomer {
    display: flex;
    align-items: center;
    margin-left: 3px;
}

.z-btn {
    font-size: 13px;
    line-height: 13px;
    width: 10px;
    text-align: center;
}

.z-track {
    width: 100px;
    height: 1px;
    margin: 0 1px 0 2px;
    background: #fff;
    position: relative;
}

.z-track i {
    position: absolute;
    left: 47px;
    top: -5px;
    width: 5px;
    height: 11px;
    background: #fff;
}

.z-pct {
    margin-left: 11px;
}
```
